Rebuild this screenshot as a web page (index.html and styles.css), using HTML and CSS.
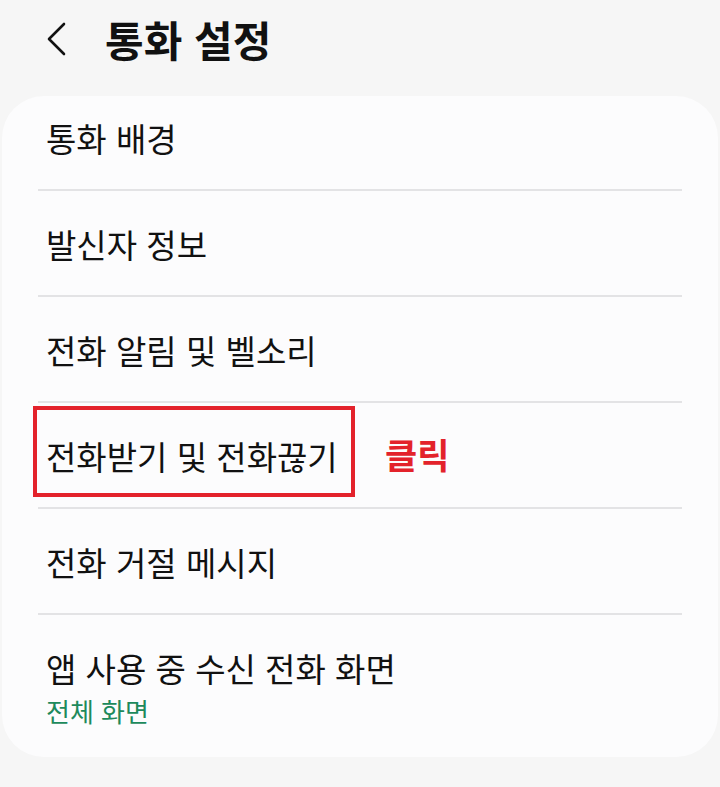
FILE: index.html
```html
<!DOCTYPE html>
<html lang="ko">
<head>
    <meta charset="UTF-8">
    <meta name="viewport" content="width=device-width, initial-scale=1.0">
    <title>통화 설정</title>
    <link rel="stylesheet" href="styles.css">
</head>
<body>

<div class="header">
    <svg class="back" width="24" height="36" viewBox="0 0 24 36">
        <path d="M19 3 L4 18 L19 33" fill="none" stroke="#111" stroke-width="2.6" stroke-linecap="round" stroke-linejoin="round"/>
    </svg>
    <h1>통화 설정</h1>
</div>

<div class="card">
    <div class="item">통화 배경</div>
    <div class="item">발신자 정보</div>
    <div class="item">전화 알림 및 벨소리</div>
    <div class="item marked">
        전화받기 및 전화끊기
        <div class="mark-box"></div>
        <div class="mark-label">클릭</div>
    </div>
    <div class="item">전화 거절 메시지</div>
    <div class="item last">
        앱 사용 중 수신 전화 화면
        <div class="sub">전체 화면</div>
    </div>
</div>

</body>
</html>
```

FILE: styles.css
```css
body {
    margin: 0;
    background: #f6f6f6;
    font-family: "Noto Sans CJK KR", "Noto Sans", sans-serif;
    color: #111;
}
.header {
    display: flex;
    align-items: center;
    height: 78px;
    padding-left: 45px;
    margin-bottom: 18px;
}
.back {
    margin-right: 36px;
}
h1 {
    margin: 0;
    font-size: 42px;
    font-weight: bold;
    line-height: 48px;
}
.card {
    margin: 0 2px;
    background: #fcfcfd;
    border-radius: 42px;
    padding: 0 36px;
}
.item {
    position: relative;
    font-size: 33px;
    line-height: 40px;
    padding: 33px 8px 31px;
    border-bottom: 2px solid #e3e3e5;
}
.item:first-child {
    padding-top: 22px;
}
.item.last {
    border-bottom: none;
    padding-bottom: 30px;
}
.sub {
    font-size: 26px;
    line-height: 32px;
    margin-top: 7px;
    color: #1d8a5c;
}
.mark-box {
    position: absolute;
    left: -5px;
    top: 3px;
    width: 314px;
    height: 83px;
    border: 4px solid #e3222b;
}
.mark-label {
    position: absolute;
    left: 347px;
    top: 31px;
    font-size: 35px;
    font-weight: bold;
    color: #e3222b;
}
```
